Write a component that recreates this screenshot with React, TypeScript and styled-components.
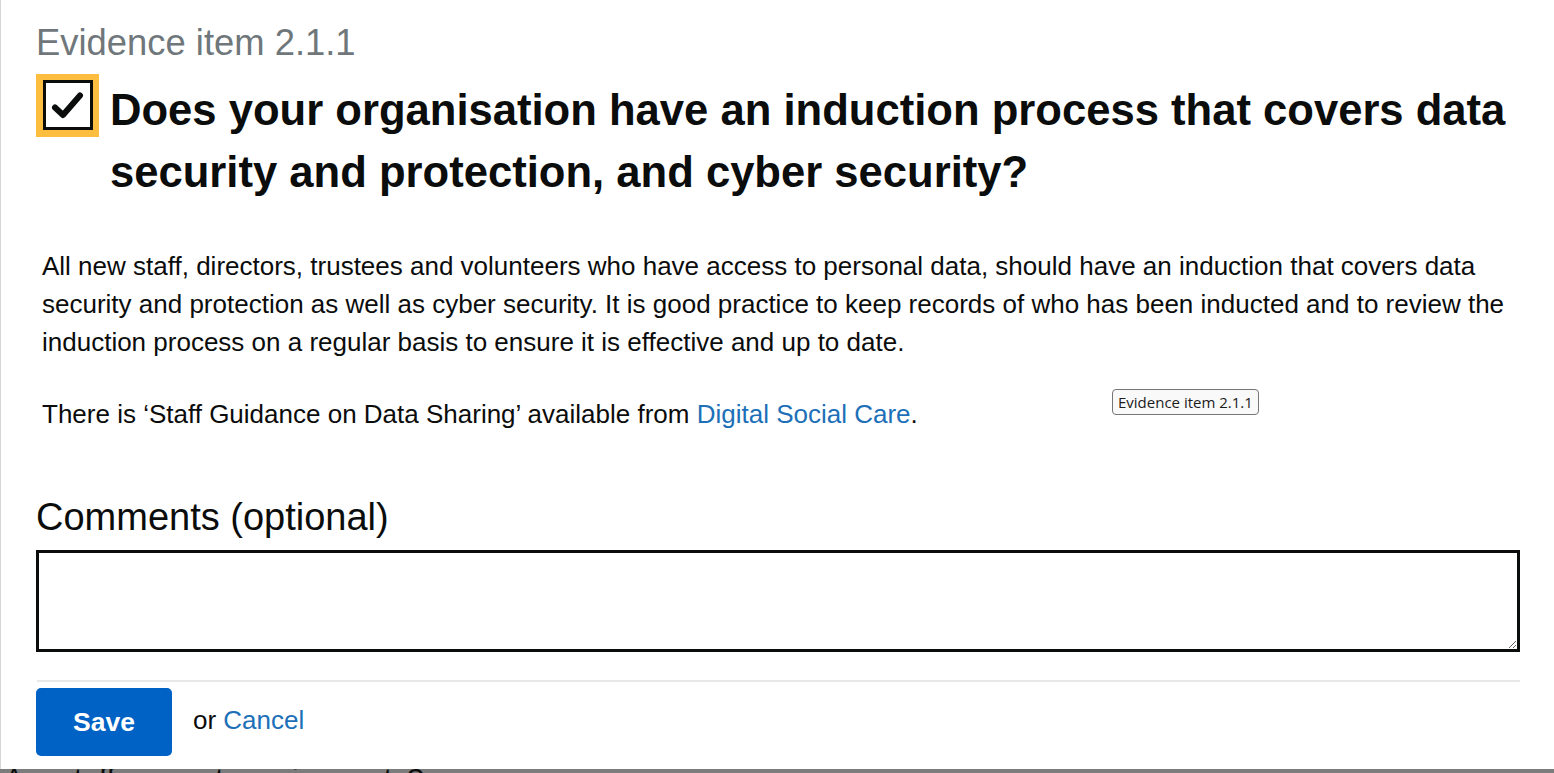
import React from "react";
import styled, { createGlobalStyle } from "styled-components";

const Global = createGlobalStyle`
  html, body { margin: 0; padding: 0; background: #7a7a7a; }
  body { font-family: Arial, "Liberation Sans", Helvetica, sans-serif; color: #0b0c0c; }
  * { box-sizing: border-box; }
`;

const Screen = styled.div`
  width: 1554px;
  height: 773px;
  overflow: hidden;
  position: relative;
  display: flex;
  flex-direction: column;
`;

const Dialog = styled.div`
  position: relative;
  background: #ffffff;
  height: 769px;
  flex: none;
  border-left: 1px solid #d6d6d6;
  padding: 23px 35px 0 35px;
  display: flex;
  flex-direction: column;
  overflow: hidden;
`;

const Backdrop = styled.div`
  flex: 1;
  min-height: 0;
  background: #7c7c7c;
  overflow: hidden;
  padding-left: 4px;
`;

const BehindText = styled.div`
  font-size: 30px;
  line-height: 30px;
  margin-top: -5px;
  color: #0b0c0c;
  white-space: nowrap;
`;

const Caption = styled.div`
  font-size: 36.4px;
  line-height: 40px;
  color: #6f777b;
`;

const QuestionRow = styled.div`
  display: flex;
  align-items: flex-start;
  margin-top: 11px;
  gap: 11px;
`;

const CheckBox = styled.div`
  flex: none;
  width: 63px;
  height: 63px;
  background: #fdbd3e;
  padding: 6px 6px 6px 7px;
`;

const CheckInner = styled.div`
  width: 50px;
  height: 50px;
  border: 3px solid #0b0c0c;
  background: #fff;
  position: relative;
`;

const Heading = styled.h1`
  margin: 5px 0 0 0;
  font-size: 43.6px;
  line-height: 62px;
  font-weight: 700;
  color: #0b0c0c;
`;

const Body = styled.div`
  margin-top: 44px;
  padding-left: 6px;
`;

const Para = styled.p<{ $gap?: number }>`
  margin: 0 0 ${(p) => p.$gap ?? 0}px 0;
  font-size: 26px;
  line-height: 38px;
`;

const Link = styled.a`
  color: #1d70b8;
  text-decoration: none;
`;

const Tooltip = styled.div`
  position: absolute;
  left: 1111px;
  top: 389px;
  height: 26px;
  padding: 0 5px;
  border: 1px solid #767676;
  border-radius: 4px;
  background: #f9f9f9;
  font-family: "Open Sans", "Noto Sans", sans-serif;
  font-size: 15px;
  line-height: 24px;
  color: #1b1b1b;
  white-space: nowrap;
`;

const Label = styled.label`
  display: block;
  margin-top: 62px;
  font-size: 38px;
  line-height: 44px;
`;

const TextArea = styled.textarea`
  display: block;
  flex: none;
  margin-top: 11px;
  width: 1484px;
  height: 102px;
  border: 3px solid #0b0c0c;
  border-radius: 0;
  resize: vertical;
  font-family: inherit;
  font-size: 23px;
  outline: none;
`;

const Divider = styled.hr`
  margin: 28px 0 0 1px;
  border: 0;
  border-top: 2px solid #e8e8e8;
  width: 1483px;
`;

const Actions = styled.div`
  display: flex;
  align-items: center;
  margin-top: 6px;
  gap: 21px;
`;

const SaveButton = styled.button`
  width: 136px;
  height: 68px;
  background: #0062c4;
  color: #fff;
  border: 0;
  border-radius: 5px;
  font-family: inherit;
  font-weight: 700;
  font-size: 26.5px;
  padding-top: 2px;
  cursor: pointer;
`;

const OrText = styled.span`
  font-size: 26px;
  line-height: 30px;
  margin-top: -4px;
`;

export default function App() {
  return (
    <>
      <Global />
      <Screen>
        <Dialog>
          <Caption>Evidence item 2.1.1</Caption>
          <QuestionRow>
            <CheckBox>
              <CheckInner>
                <svg width="44" height="44" viewBox="0 0 44 44" style={{ position: "absolute", left: 0, top: 0 }}>
                  <path d="M9 24.5 L17 32 L34 12.5" fill="none" stroke="#0b0c0c" strokeWidth="6" strokeLinecap="round" strokeLinejoin="round" />
                </svg>
              </CheckInner>
            </CheckBox>
            <Heading>
              Does your organisation have an induction process that covers data security and protection, and cyber security?
            </Heading>
          </QuestionRow>
          <Body>
            <Para $gap={34}>
              All new staff, directors, trustees and volunteers who have access to personal data, should have an induction that covers data security and protection as well as cyber security. It is good practice to keep records of who has been inducted and to review the induction process on a regular basis to ensure it is effective and up to date.
            </Para>
            <Para>
              There is ‘Staff Guidance on Data Sharing’ available from <Link href="#">Digital Social Care</Link>.
            </Para>
          </Body>
          <Tooltip>Evidence item 2.1.1</Tooltip>
          <Label htmlFor="comments">Comments (optional)</Label>
          <TextArea id="comments" />
          <Divider />
          <Actions>
            <SaveButton>Save</SaveButton>
            <OrText>
              or <Link href="#">Cancel</Link>
            </OrText>
          </Actions>
        </Dialog>
        <Backdrop>
          <BehindText>Are staff support requirements?</BehindText>
        </Backdrop>
      </Screen>
    </>
  );
}
